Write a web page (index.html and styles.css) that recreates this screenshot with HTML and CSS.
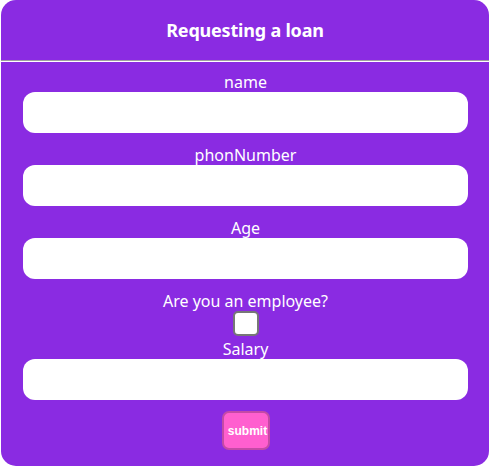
FILE: index.html
```html
<!DOCTYPE html>
<html>
<head>
<meta charset="utf-8">
<link rel="stylesheet" href="styles.css">
</head>
<body>
<div class="card">
  <div class="header"><h1 class="title">Requesting a loan</h1></div>
  <hr class="rule">
  <form class="form">
    <label class="label">name</label>
    <input class="field" type="text">
    <label class="label">phonNumber</label>
    <input class="field" type="text">
    <label class="label">Age</label>
    <input class="field" type="text">
    <label class="label">Are you an employee?</label>
    <input class="check" type="checkbox">
    <label class="label">Salary</label>
    <input class="field" type="text">
    <button class="submit" type="button">submit</button>
  </form>
</div>
</body>
</html>
```
FILE: styles.css
```css
html, body {
  margin: 0;
  padding: 0;
  background: #ffffff;
}
body {
  font-family: "Noto Sans", "Open Sans", sans-serif;
}
.card {
  margin: 0 1px;
  height: 466px;
  background: #8a2be2;
  border-radius: 15px;
  color: #ffffff;
  display: flex;
  flex-direction: column;
}
.header {
  height: 60px;
  display: flex;
  align-items: center;
  justify-content: center;
}
.title {
  margin: 0;
  font-size: 18px;
  font-weight: 700;
  line-height: 24px;
  letter-spacing: -0.2px;
}
.rule {
  margin: 0;
  height: 0;
  border: 0;
  border-top: 1px solid #a0a0a0;
  border-bottom: 1px solid #ffffff;
}
.form {
  display: flex;
  flex-direction: column;
  align-items: center;
  padding: 10px 21px 0 22px;
}
.label {
  display: block;
  font-size: 16px;
  line-height: 20px;
  height: 20px;
  text-align: center;
}
.field {
  box-sizing: border-box;
  width: 445px;
  height: 41px;
  border: 0;
  border-radius: 12px;
  background: #ffffff;
  margin: 0 0 12px 0;
  padding: 0 10px;
  font-size: 16px;
}
.check {
  appearance: none;
  -webkit-appearance: none;
  box-sizing: border-box;
  width: 26px;
  height: 25px;
  margin: 0 0 3px 0;
  border: 2px solid #777777;
  border-radius: 5px;
  background: #ffffff;
}
.submit {
  box-sizing: border-box;
  margin-top: -1px;
  width: 48px;
  height: 39px;
  padding: 0 0 0 4px;
  border: 2px solid #c44aa6;
  border-radius: 7px;
  background: #ff5fcf;
  color: #ffffff;
  font-family: "Liberation Sans", Arial, sans-serif;
  font-size: 12px;
  font-weight: 700;
  text-align: center;
}
```
